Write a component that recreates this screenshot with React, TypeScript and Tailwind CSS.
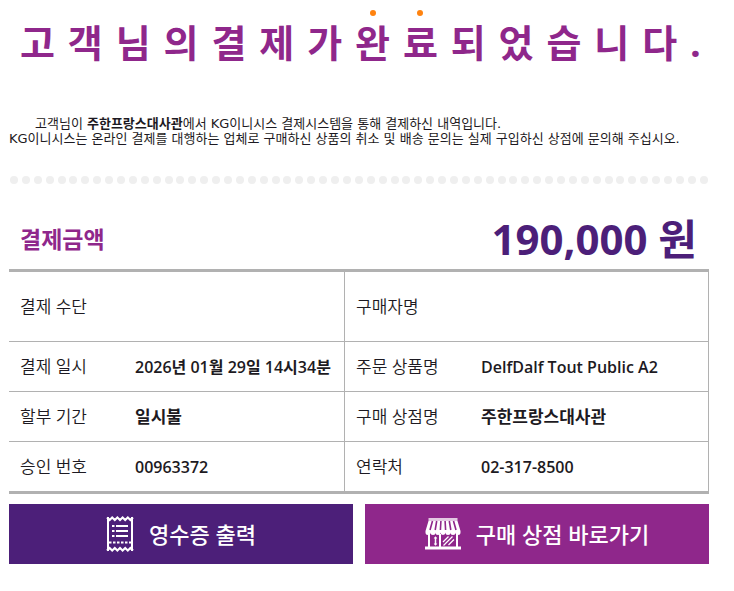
const title = "고객님의결제가완료되었습니다.";
const dotted = ["완", "료"];

const rows = [
  { left: "결제 수단", leftValue: "", right: "구매자명", rightValue: "" },
  {
    left: "결제 일시",
    leftValue: "2026년 01월 29일 14시34분",
    right: "주문 상품명",
    rightValue: "DelfDalf Tout Public A2",
  },
  {
    left: "할부 기간",
    leftValue: "일시불",
    right: "구매 상점명",
    rightValue: "주한프랑스대사관",
  },
  {
    left: "승인 번호",
    leftValue: "00963372",
    right: "연락처",
    rightValue: "02-317-8500",
  },
];

// 숫자나 영문이 섞인 값은 한 단계 작게
const valueSize = (value: string) =>
  /[0-9A-Za-z]/.test(value) ? "text-[16px]" : "text-[17px]";

function ReceiptIcon() {
  return (
    <svg width="28" height="36" viewBox="0 0 28 36" fill="none" aria-hidden="true">
      <path d="M2 1v34M26 1v34" stroke="#fff" strokeWidth="2" />
      <path
        d="M1 1.500 3.600 4 6.200 1.500 8.800 4l2.600-2.500L14 4l2.600-2.500L19.200 4l2.600-2.500L24.400 4 27 1.500M1 34.500 3.600 32l2.600 2.500L8.800 32l2.600 2.500L14 32l2.600 2.500 2.600-2.500 2.600 2.500 2.600-2.500 2.600 2.500"
        stroke="#fff"
        strokeWidth="2"
      />
      <path
        d="M6 10h2.500M6 15h2.500M6 20h2.500M10 10h12M10 15h12M10 20h12"
        stroke="#fff"
        strokeWidth="2"
      />
      <path d="M3 26.500h22" stroke="#fff" strokeWidth="2" strokeDasharray="2.500 1.500" />
    </svg>
  );
}

function StoreIcon() {
  return (
    <svg width="36" height="32" viewBox="0 0 36 32" fill="none" aria-hidden="true">
      <path d="M3.500 0h29v3h-29z" fill="#fff" opacity="0.75" />
      {/* 차양 */}
      <path
        d="M3.500 3h29L35.500 13v1.500a2.500 2.500 0 0 1-5 0 2.500 2.500 0 0 1-5 0 2.500 2.500 0 0 1-5 0 2.500 2.500 0 0 1-5 0 2.500 2.500 0 0 1-5 0 2.500 2.500 0 0 1-5 0 2.500 2.500 0 0 1-5 0V13z"
        fill="#fff"
      />
      <path
        d="M7.500 3 5 12M11.700 3l-1.500 9M15.900 3l-.5 9M20.100 3l.5 9M24.300 3l1.500 9M28.500 3l2.500 9"
        stroke="#8f278b"
        strokeWidth="1.600"
      />
      {/* 문과 진열창 */}
      <path d="M4 16v13M15 16v13M32 16v13" stroke="#fff" strokeWidth="2" />
      <path d="M10.500 19v8" stroke="#fff" strokeWidth="1.500" />
      <path d="m8.700 20.500 1.800-2.300 1.800 2.300zM8.700 25.500l1.800 2.300 1.800-2.300z" fill="#fff" />
      <path d="m18 24 5.500-5.500M18.500 27.500l9-9M23.500 27l5.500-5.500" stroke="#fff" strokeWidth="1.300" />
      <path d="M0 30h36" stroke="#fff" strokeWidth="3" />
    </svg>
  );
}

export default function App() {
  return (
    <main className="w-full bg-white pt-[14px] pr-[25px] pb-7 pl-[9px] font-['Open_Sans','Noto_Sans_CJK_KR',sans-serif] text-[#1d1a22]">
      <h1 className="flex justify-between pr-2 pl-[11px] text-[38px] leading-[56px] font-bold text-[#8f278b]">
        {title.split("").map((char, i) => (
          <span key={i} className="relative">
            {dotted.includes(char) && (
              <span className="absolute -top-1 left-1/2 size-[6px] -translate-x-1/2 rounded-full bg-[#ff830f]" />
            )}
            {char}
          </span>
        ))}
      </h1>

      <p className="mt-[46px] indent-[26px] font-['DejaVu_Sans','Noto_Sans_CJK_KR',sans-serif] text-[13px] leading-[15px] font-normal">
        고객님이 <b>주한프랑스대사관</b>에서 KG이니시스 결제시스템을 통해
        결제하신 내역입니다.
        <br />
        KG이니시스는 온라인 결제를 대행하는 업체로 구매하신 상품의 취소 및 배송
        문의는 실제 구입하신 상점에 문의해 주십시오.
      </p>

      <div className="mt-[30px] flex justify-between px-[1px]">
        {Array.from({ length: 59 }, (_, i) => (
          <span key={i} className="size-2 rounded-full bg-[#efefef]" />
        ))}
      </div>

      <div className="mt-7 mb-1 flex items-center justify-between pr-3 pl-[11px]">
        <h2 className="text-[23px] leading-[50px] font-bold text-[#8f278b]">
          결제금액
        </h2>
        <strong className="text-[42px] leading-[53px] font-bold text-[#4c1f79]">
          190,000 원
        </strong>
      </div>

      <table className="w-full table-fixed border-separate border-spacing-0 border-y-3 border-[#b1b1b1] text-[17px] leading-6 whitespace-nowrap">
        <colgroup>
          <col className="w-[18%]" />
          <col className="w-[30%]" />
          <col className="w-[18%]" />
          <col />
        </colgroup>
        <tbody>
          {rows.map((row) => (
            <tr
              key={row.left}
              className="h-[50px] first:h-[70px] last:h-[49px] [&:not(:last-child)>*]:border-b [&>*]:border-[#b1b1b1]"
            >
              <th scope="row" className="pl-[11px] text-left font-[350]">
                {row.left}
              </th>
              <td className={`border-r font-semibold ${valueSize(row.leftValue)}`}>
                {row.leftValue}
              </td>
              <th scope="row" className="pl-[11px] text-left font-[350]">
                {row.right}
              </th>
              <td className={`border-r pl-[10px] font-semibold ${valueSize(row.rightValue)}`}>
                {row.rightValue}
              </td>
            </tr>
          ))}
        </tbody>
      </table>

      <div className="mt-[10px] grid grid-cols-2 gap-3 text-[22px] leading-8 font-medium text-white">
        <button
          type="button"
          className="flex h-[60px] cursor-pointer items-center justify-center gap-[15px] bg-[#4c1f79]"
        >
          <ReceiptIcon />
          영수증 출력
        </button>
        <a
          href="#"
          className="flex h-[60px] items-center justify-center gap-[15px] bg-[#8f278b]"
        >
          <StoreIcon />
          구매 상점 바로가기
        </a>
      </div>
    </main>
  );
}
